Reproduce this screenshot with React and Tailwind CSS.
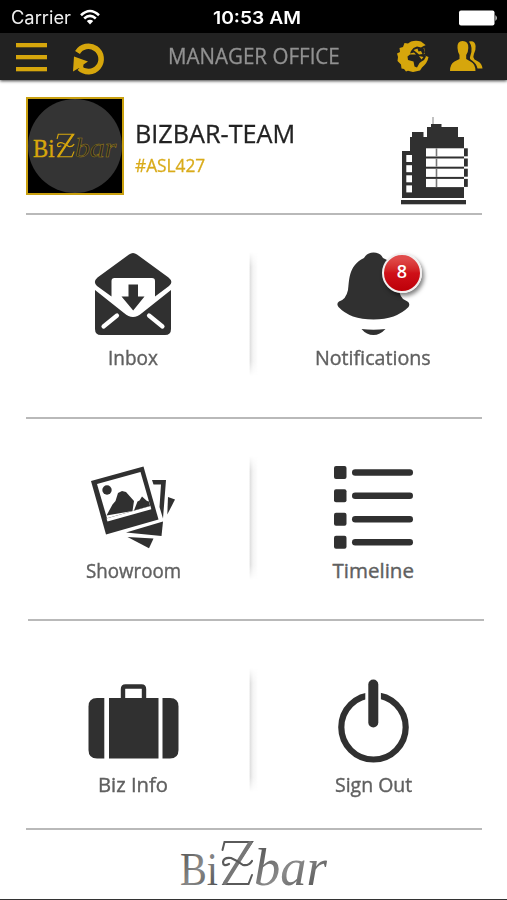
import { useLayoutEffect, useRef, useState } from "react";

const INK = "#303030";
const GOLD = "#d6a60c";

// Condenses or widens a line of text so that it fills the given width.
function FitText({ width, className, children }) {
  const ref = useRef(null);
  const [scale, setScale] = useState(1);
  useLayoutEffect(() => {
    const measure = () => ref.current && setScale(width / ref.current.offsetWidth);
    measure();
    document.fonts.ready.then(measure);
  }, [width]);
  return (
    <span className="flex" style={{ width }}>
      <span ref={ref} className={`shrink-0 origin-left whitespace-nowrap ${className}`} style={{ transform: `scaleX(${scale})` }}>
        {children}
      </span>
    </span>
  );
}

function StatusBar() {
  return (
    <div className="flex h-[33px] items-center bg-black pl-[11px] pr-[9px] pt-[3px] font-['Inter',sans-serif] text-white">
      <div className="flex w-[202px] items-center gap-[9px]">
        <FitText width={60} className="text-[18px] leading-6 text-[#f0f0f0]">Carrier</FitText>
        <svg width="20" height="16" viewBox="80 9 20 16" className="-mt-[2px]" fill="none" stroke="#fff" strokeWidth="2.6">
          <path d="M81 15.2Q90 6.800 99 15.200" />
          <path d="M84.200 18.500Q90 13.200 95.800 18.500" />
          <path d="M90 24.500L86.800 21Q90 18.300 93.200 21Z" fill="#fff" stroke="none" />
        </svg>
      </div>
      <FitText width={88} className="text-[17.500px] font-semibold leading-6">10:53 AM</FitText>
      <svg width="40" height="16" viewBox="0 0 40 16" className="-mt-[1px] ml-auto">
        <rect x="1" y=".5" width="35.500" height="15" rx="2" fill="#fff" />
        <path d="M37.500 5Q40 8 37.500 11Z" fill="#fff" />
      </svg>
    </div>
  );
}

function Header() {
  return (
    <header className="relative flex h-[47px] items-center bg-[#222222] px-4 shadow-[0_1px_3px_rgba(0,0,0,0.75)]">
      <svg width="31" height="30" viewBox="16 42 31 30" className="mt-px" fill={GOLD}>
        <rect x="16" y="43" width="31" height="4.300" />
        <rect x="16" y="55" width="31" height="4.300" />
        <rect x="16" y="67" width="31" height="4.300" />
      </svg>
      <svg width="34" height="34" viewBox="71 41 34 34" className="ml-6 mt-[3px]">
        <path d="M77.500 52.500A12.700 12.700 0 1 1 79.500 68" fill="none" stroke={GOLD} strokeWidth="5.600" />
        <path d="M74 56.500L88 61.500L83.500 64.500L83 68.500L78.500 68.300L73 71.500Z" fill={GOLD} />
      </svg>
      <div className="-mt-[3px] ml-[63px]">
        <FitText width={172} className="font-['Open_Sans',sans-serif] text-[22px] leading-8 text-[#929292] [-webkit-text-stroke:0.3px_#929292]">MANAGER OFFICE</FitText>
      </div>
      <svg width="34" height="34" viewBox="396 40 34 34" className="ml-14">
        <path d="M404.500 43L408 43.500L411 41.500Q416 40 421 41.500L425.500 45L424 47L425 53L423.500 55L428.500 57Q427.500 63 422 67.500L420 70.500L413 72L408 70.800L406 71.500L404 69L401.500 68.500L401 64.500L397.500 61L398 57L397 53.500L400 52L399.500 48L403 47Z" fill={GOLD} />
        <path d="M411 51L413.500 48L417 46.500L421 47.500L424.500 45.500L426 47L423.500 48L425 52.500L423.500 54L426 56.500L424 60L421.500 61.500L419.500 63L417 67.500L414.500 66.500L413.500 61.500L408 60L407.500 56.500L410 54.500L416 54.500L414 52.500L410 53.500Z" fill="#222" />
        <path d="M413.500 50L417.500 48.500L418.500 51.500L421 51L422.500 54L419 54.500L416 52Z" fill={GOLD} />
        <path d="M419 56L423.500 57L421.500 59.500Z" fill={GOLD} />
      </svg>
      <svg width="34" height="32" viewBox="449 41 34 32" className="-mt-px ml-[19px]" fill={GOLD}>
        <path d="M469 42.500Q475 41 475.600 47Q476 51 473.900 55Q472.500 58 474.500 60.500L479 63Q482 65 482.500 69.500H477.500Q476.500 64.500 472 61.500Q469 60 470.300 57Q473.500 49 469 42.500Z" />
        <path d="M457.500 49Q457 42 462.500 42Q468.700 42 468.300 49Q468.200 53.500 466.200 56V60L470.500 62.500Q475.500 65 475.500 72H450Q450 65 454.500 62.500L459.500 60V56Q457.800 53.500 457.500 49Z" />
      </svg>
    </header>
  );
}

function Wordmark({ variant }) {
  const gold = variant === "gold";
  const main = gold ? GOLD : "url(#steel)";
  return (
    <svg
      className={gold ? "h-[32px] w-[94px] shrink-0 overflow-visible" : "h-[60px] w-[166px] shrink-0 overflow-visible"}
      viewBox="171 834 166 60"
      preserveAspectRatio="none"
      fontFamily="Liberation Serif, serif"
    >
      <defs>
        <linearGradient id="steel" x1="0" x2="1" y1="0" y2="1">
          <stop offset="0" stopColor="#4a4a4a" />
          <stop offset=".5" stopColor="#8a8a8a" />
          <stop offset="1" stopColor="#444" />
        </linearGradient>
      </defs>
      <text x="180" y="885" fontSize="47" textLength="38" lengthAdjust="spacingAndGlyphs" fill={main} stroke={gold ? GOLD : "none"} strokeWidth=".8">Bi</text>
      <g fill="none" stroke={gold ? GOLD : "#5a5a5a"} strokeLinecap="round">
        <path d="M222.500 850L224.500 842H252L223.500 884H248.500L252 875" strokeWidth="2" />
        <path d="M250 843L225 883" strokeWidth="4" stroke={gold ? GOLD : "#777"} />
        <path d="M229 864Q223 867 223 862Q224 857 231 858Q238 861 243 865Q249 866 252 861" strokeWidth="2.200" />
      </g>
      <text
        x="254"
        y="885"
        fontSize="53"
        fontStyle="italic"
        textLength="73"
        lengthAdjust="spacingAndGlyphs"
        fill={gold ? "#292823" : "url(#steel)"}
        stroke={gold ? "#9a7d18" : "none"}
        strokeWidth="1"
      >
        bar
      </text>
    </svg>
  );
}

function Building() {
  return (
    <svg width="70" height="90" viewBox="399 116 70 90">
      <path d="M433 117V125" stroke="#999" strokeWidth="1.200" />
      <path d="M402 151H410V137H412V132H423.500V137H427V127H431V124H441.500V127H458V137H464V198H402Z" fill={INK} />
      {[155, 165.200, 175.300, 185.400].map((y) => (
        <rect key={y} x="406.300" y={y} width="5.700" height="7" fill="#fff" />
      ))}
      {[148.300, 158.500, 168.700, 178.900].map((y) => (
        <g key={y}>
          <rect x="426" y={y} width="38" height="8.200" fill="#fff" />
          <rect x="464" y={y} width="3.800" height="8" fill={INK} />
          <rect x="435.700" y={y} width="1.600" height="8.200" fill="#777" />
        </g>
      ))}
      <rect x="401" y="200" width="65" height="4.300" fill={INK} />
    </svg>
  );
}

function InboxIcon() {
  return (
    <svg width="100" height="100" viewBox="83 243 100 100" fill={INK}>
      <path d="M129 254.500Q133 251.500 137 254.500L168.500 277.500Q174 282 169 286L155 296.500V281Q155 278 152 278H114.500Q111.500 278 111.500 281V296.500L97 286Q92.500 282 97.500 277.500Z" />
      <path d="M95 290L124 313Q133 321 142 313L171 290V329Q171 335 165 335H101Q95 335 95 329Z" />
      <path d="M128.500 284.500H138V296.500H144.500L133.200 310.500L121.500 296.500H128.500Z" />
      <path d="M103.500 326.500L117 315.500M149 315.500L162.500 326.500" stroke="#fff" strokeWidth="4.200" strokeLinecap="round" />
    </svg>
  );
}

function BellIcon() {
  return (
    <div className="relative">
      <svg width="100" height="100" viewBox="323 243 100 100" fill={INK}>
        <path d="M364 258Q367 252.500 373.500 252.500Q380.500 252.500 383 258Q398 264 398 280Q398 294 403 299L407.500 301.500Q410.500 303.500 408.500 307Q396 319.500 373.500 319.500Q350 319.500 338.500 307Q336 303.500 339 301.500Q346 299.500 348 290C349.500 282 347.500 266 364 258Z" />
        <path d="M361.500 329Q373.500 330.500 385.500 329Q380 335 373.500 335Q366.500 335 361.500 329Z" />
      </svg>
      <span className="absolute left-[59px] top-[10px] flex size-10 items-center justify-center rounded-full border-[2.500px] border-[#f1eeee] bg-gradient-to-b from-[#e04a4a] from-10% via-[#cf1018] via-50% to-[#bd0008] pb-[3px] font-['Open_Sans',sans-serif] text-[18px] font-semibold text-white shadow-[2px_3px_4px_rgba(0,0,0,0.5)]">
        8
      </span>
    </div>
  );
}

function ShowroomIcon() {
  return (
    <svg width="100" height="100" viewBox="83 456 100 100" fill={INK}>
      <path d="M91 481L143.500 466.500L158.500 519.500L106 534.500Z" />
      <path d="M97 484L140.500 472L150.300 506L107 518.300Z" fill="#fff" />
      <path d="M106.500 518.500L150.500 506L151.300 509.300L107.500 521.500Z" fill="#fff" />
      <circle cx="107" cy="490" r="4.700" />
      <path d="M106.500 515.500L112.500 504.500L115.500 501L118 493L122 491L126 492L134 501L132.500 511Z" />
      <path d="M134 510.500L137.500 501.500L139.500 500.500L142 496.500L147 501L149 501.500L150 506Z" />
      <path d="M152 480H166L163 518.500L159.500 507L161 484.500H153.500Z" />
      <path d="M168 497L175 499.500L167.300 514.500Z" />
      <path d="M126 532.500L163 521.500L161.500 536Z" />
      <path d="M127.500 537L153.500 538.500L149 548.300Z" />
    </svg>
  );
}

function TimelineIcon() {
  return (
    <svg width="100" height="100" viewBox="323 456 100 100" fill={INK}>
      {[466, 489.200, 512.800, 535.800].map((y) => (
        <g key={y}>
          <rect x="334" y={y} width="12.500" height="13" rx="2" />
          <rect x="352" y={y + 3.300} width="61" height="6.400" rx="3.200" />
        </g>
      ))}
    </svg>
  );
}

function BriefcaseIcon() {
  return (
    <svg width="100" height="100" viewBox="83 670 100 100" fill={INK}>
      <path d="M123 699V689Q123 686.500 125.500 686.500H141.500Q144 686.500 144 689V699" fill="none" stroke={INK} strokeWidth="4.400" />
      <path d="M104.300 698V758.500H97Q88.500 758.500 88.500 750V706.500Q88.500 698 97 698Z" />
      <rect x="109" y="698" width="49.500" height="60.500" />
      <path d="M162.500 698H170Q178.500 698 178.500 706.500V750Q178.500 758.500 170 758.500H162.500Z" />
    </svg>
  );
}

function PowerIcon() {
  return (
    <svg width="100" height="100" viewBox="323 670 100 100" fill="none" stroke={INK}>
      <circle cx="373.500" cy="727.300" r="32.200" strokeWidth="6.200" />
      <rect x="365.300" y="690" width="15.600" height="13" fill="#fff" stroke="none" />
      <path d="M373.300 684.500V722.500" strokeWidth="10" strokeLinecap="round" />
    </svg>
  );
}

function Tile({ icon, label, width }) {
  return (
    <div className="flex flex-col items-center gap-[2px]">
      {icon}
      <FitText width={width} className="font-['Open_Sans',sans-serif] text-[20.500px] leading-6 text-[#606060] [-webkit-text-stroke:0.4px_#606060]">{label}</FitText>
    </div>
  );
}

function Row({ className, dividerClass, left, right }) {
  return (
    <div className={`grid grid-cols-[236px_246px] pl-[14px] ${className}`}>
      <div className="flex justify-between">
        <span className="w-[10px]" />
        {left}
        <span className={`-mr-2 h-[124px] w-4 bg-[linear-gradient(to_right,transparent_45%,#dedede_50%,#f3f3f3_68%,transparent)] [mask-image:linear-gradient(transparent,#000_12%,#000_88%,transparent)] ${dividerClass}`} />
      </div>
      <div className="flex justify-center">{right}</div>
    </div>
  );
}

function Rule({ className = "ml-[26px]" }) {
  return <div className={`h-[2px] w-[456px] shrink-0 bg-[#b9b9b9] ${className}`} />;
}

export default function App() {
  return (
    <div className="flex h-[900px] w-[507px] flex-col overflow-hidden border-b border-[#333] bg-white">
      <StatusBar />
      <Header />
      <section className="flex h-[133px] items-start pl-[26px] pr-[38px] pt-[17px]">
        <div className="flex size-[98px] items-center justify-center border-2 border-[#c9a00f] bg-black">
          <div className="flex size-[94px] items-center justify-center rounded-full bg-[#343434]">
            <Wordmark variant="gold" />
          </div>
        </div>
        <div className="ml-[11px] mt-[19px] flex flex-col">
          <FitText width={160} className="font-['Open_Sans',sans-serif] text-[26px] leading-[34px] text-[#222] [-webkit-text-stroke:0.3px_#222]">BIZBAR-TEAM</FitText>
          <FitText width={70} className="font-['Open_Sans',sans-serif] text-[19px] leading-[30px] text-[#d9ab1a] [-webkit-text-stroke:0.3px_#d9ab1a]">#ASL427</FitText>
        </div>
        <div className="ml-auto mt-[19px]">
          <Building />
        </div>
      </section>
      <Rule />
      <Row className="h-[202px] pt-[28px]" dividerClass="mt-[9px]" left={<Tile icon={<InboxIcon />} label="Inbox" width={50} />} right={<Tile icon={<BellIcon />} label="Notifications" width={116} />} />
      <Rule />
      <Row className="h-[200px] pt-[37px]" dividerClass="mt-0" left={<Tile icon={<ShowroomIcon />} label="Showroom" width={95} />} right={<Tile icon={<TimelineIcon />} label="Timeline" width={81} />} />
      <Rule className="ml-[28px]" />
      <Row className="h-[207px] pt-[49px]" dividerClass="-mt-[2px]" left={<Tile icon={<BriefcaseIcon />} label="Biz Info" width={70} />} right={<Tile icon={<PowerIcon />} label="Sign Out" width={77} />} />
      <Rule />
      <footer className="flex pl-[171px] pt-1">
        <Wordmark variant="steel" />
      </footer>
    </div>
  );
}
